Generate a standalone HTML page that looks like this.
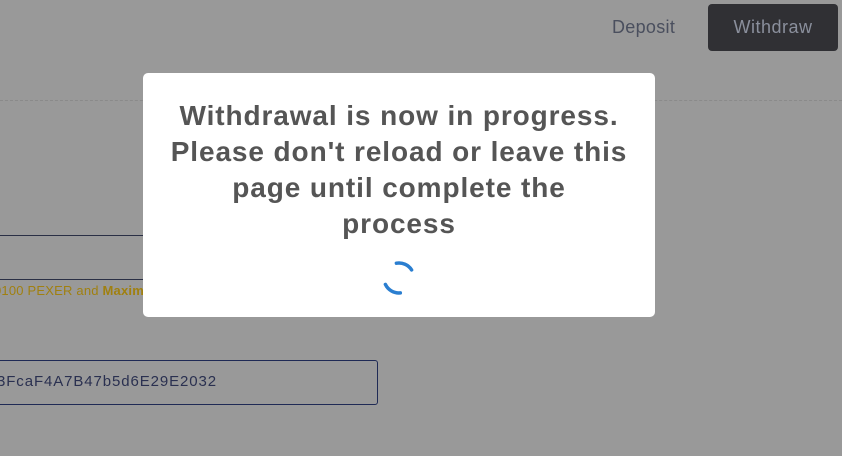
<!DOCTYPE html>
<html><head><style>
body{margin:0;width:842px;height:456px;background:#999;position:relative;overflow:hidden;font-family:"Liberation Sans",sans-serif}
.a{position:absolute}
</style></head><body>
<div class="a" style="left:612px;top:17px;font-size:18px;color:#4a4f5e;letter-spacing:.3px">Deposit</div>
<div class="a" style="left:708px;top:4px;width:130px;height:47px;background:#303034;border-radius:4px;color:#8a8f9c;font-size:18px;line-height:47px;text-align:center;letter-spacing:.5px">Withdraw</div>
<div class="a" style="left:0;top:100px;width:842px;border-top:1px dashed #8a8a8a"></div>
<div class="a" style="left:0;top:235px;width:150px;border-top:1px solid #2a2f45"></div>
<div class="a" style="left:0;top:279px;width:150px;border-top:1px solid #2a2f45"></div>
<div class="a" style="left:-6px;top:283px;font-size:13px;color:#a08010;letter-spacing:.2px">0100 PEXER and <b>Maxim</b></div>
<div class="a" style="left:-5px;top:360px;width:383px;height:45px;border:1px solid #1f2a55;border-radius:3px;box-sizing:border-box"></div>
<div class="a" style="left:-3px;top:373px;font-size:15px;color:#2a3050;letter-spacing:.9px">3FcaF4A7B47b5d6E29E2032</div>
<div class="a" style="left:143px;top:73px;width:512px;height:244px;background:#fff;border-radius:5px">
<div style="position:absolute;top:25px;left:0;width:512px;text-align:center;font-size:28px;font-weight:bold;color:#555;line-height:36px;letter-spacing:.9px">Withdrawal is now in progress.<br>Please don't reload or leave this<br>page until complete the<br>process</div>
<svg style="position:absolute;left:236px;top:185px" width="40" height="40" viewBox="0 0 40 40">
<g fill="none" stroke="#2a7ed0" stroke-width="3.5" stroke-linecap="round">
<path d="M17.4 5.2 A15 15 0 0 1 32.6 11.9"/>
<path d="M21.3 34.9 A15 15 0 0 1 6.4 26.4"/>
</g></svg>
</div>
</body></html>
